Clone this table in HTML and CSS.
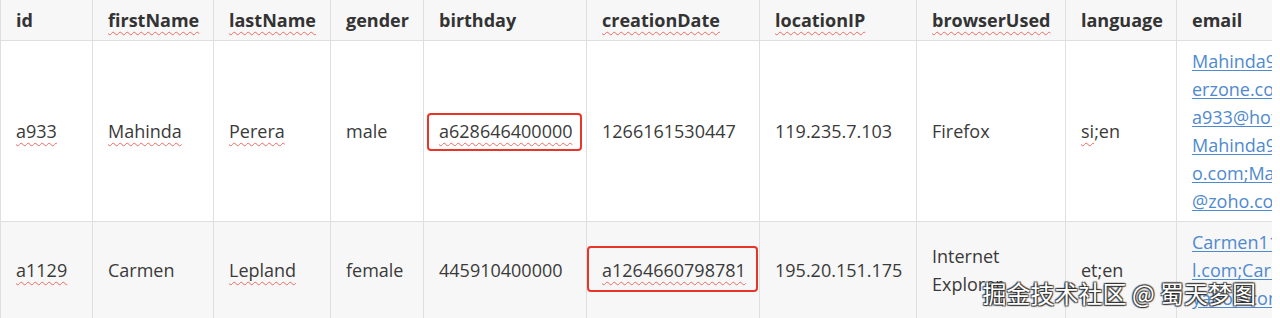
FILE: index.html
```html
<!DOCTYPE html>
<html lang="en">
<head>
<meta charset="utf-8">
<title>Table</title>
<link rel="stylesheet" href="styles.css">
</head>
<body>
<div class="wrap">
  <table class="grid">
    <thead>
      <tr>
        <th class="c-id">id</th>
        <th class="c-fn"><span class="sp">firstName</span></th>
        <th class="c-ln"><span class="sp">lastName</span></th>
        <th class="c-g">gender</th>
        <th class="c-b">birthday</th>
        <th class="c-cd"><span class="sp">creationDate</span></th>
        <th class="c-ip"><span class="sp">locationIP</span></th>
        <th class="c-br"><span class="sp">browserUsed</span></th>
        <th class="c-la">language</th>
        <th class="c-em">email</th>
      </tr>
    </thead>
    <tbody>
      <tr class="odd">
        <td><span class="sp">a933</span></td>
        <td><span class="sp">Mahinda</span></td>
        <td><span class="sp">Perera</span></td>
        <td>male</td>
        <td><span class="mark mark-1"><span class="sp">a628646400000</span></span></td>
        <td>1266161530447</td>
        <td>119.235.7.103</td>
        <td>Firefox</td>
        <td><span class="sp">si</span>;en</td>
        <td class="em"><a href="#">Mahinda933@gam<br>erzone.com;<br>a933@hotmail.com;<br>Mahinda933@yah<br>o.com;Mahinda933<br>@zoho.com</a></td>
      </tr>
      <tr class="even">
        <td><span class="sp">a1129</span></td>
        <td>Carmen</td>
        <td><span class="sp">Lepland</span></td>
        <td>female</td>
        <td>445910400000</td>
        <td><span class="mark mark-2"><span class="sp">a1264660798781</span></span></td>
        <td>195.20.151.175</td>
        <td>Internet Explorer</td>
        <td>et;en</td>
        <td class="em"><a href="#">Carmen1129@hotmai<br>l.com;Carmen1129@<br>yahoo.com</a></td>
      </tr>
    </tbody>
  </table>
  <div class="watermark">掘金技术社区 @ 蜀天梦图</div>
</div>
</body>
</html>
```

FILE: styles.css
```css
html, body {
  margin: 0;
  padding: 0;
  background: #ffffff;
}

.wrap {
  position: relative;
  width: 1272px;
  height: 318px;
  overflow: hidden;
  font-family: "Open Sans", "Noto Sans", "Liberation Sans", "Noto Sans CJK SC", sans-serif;
  font-size: 18px;
  line-height: 28px;
  color: #3a3a3a;
}

.grid {
  border-collapse: separate;
  border-spacing: 0;
  table-layout: fixed;
  width: 1377px;
}

.grid th,
.grid td {
  box-sizing: border-box;
  padding: 6px 15px;
  border-right: 1px solid #dfdfdf;
  border-bottom: 1px solid #dfdfdf;
  text-align: left;
  vertical-align: middle;
  overflow: hidden;
}

.grid th:first-child,
.grid td:first-child {
  border-left: 1px solid #dfdfdf;
}

.grid th {
  background: #f7f7f7;
  font-weight: 700;
  color: #333333;
  white-space: nowrap;
}

.grid tr.odd td {
  background: #ffffff;
}

.grid tr.even td {
  background: #f7f7f7;
}

.c-id { width: 93px; }
.c-fn { width: 121px; }
.c-ln { width: 117px; }
.c-g  { width: 93px; }
.c-b  { width: 163px; }
.c-cd { width: 173px; }
.c-ip { width: 157px; }
.c-br { width: 149px; }
.c-la { width: 111px; }
.c-em { width: 200px; }

.em {
  white-space: nowrap;
}

.em a {
  color: #4f8ad0;
  text-decoration: underline;
  text-underline-offset: 2px;
}

.sp {
  text-decoration: underline wavy #ec6a62;
  text-decoration-thickness: 1px;
  text-underline-offset: 4px;
  text-decoration-skip-ink: none;
}

.mark {
  position: relative;
  display: inline-block;
}

.mark::after {
  content: "";
  position: absolute;
  border: 2.5px solid #e9342a;
  border-radius: 4px;
}

.mark-1::after {
  left: -12px;
  right: -9px;
  top: -4px;
  bottom: -6px;
}

.mark-2::after {
  left: -15px;
  right: -12px;
  top: -10px;
  bottom: -8px;
}

.watermark {
  position: absolute;
  right: 16px;
  bottom: 10px;
  font-family: "Noto Sans CJK SC", sans-serif;
  font-size: 24px;
  line-height: 30px;
  color: #ffffff;
  letter-spacing: 0;
  text-shadow:
    1px 1px 1px rgba(40, 40, 40, 0.85),
    -1px -1px 1px rgba(40, 40, 40, 0.85),
    1px -1px 1px rgba(40, 40, 40, 0.85),
    -1px 1px 1px rgba(40, 40, 40, 0.85);
}
```
